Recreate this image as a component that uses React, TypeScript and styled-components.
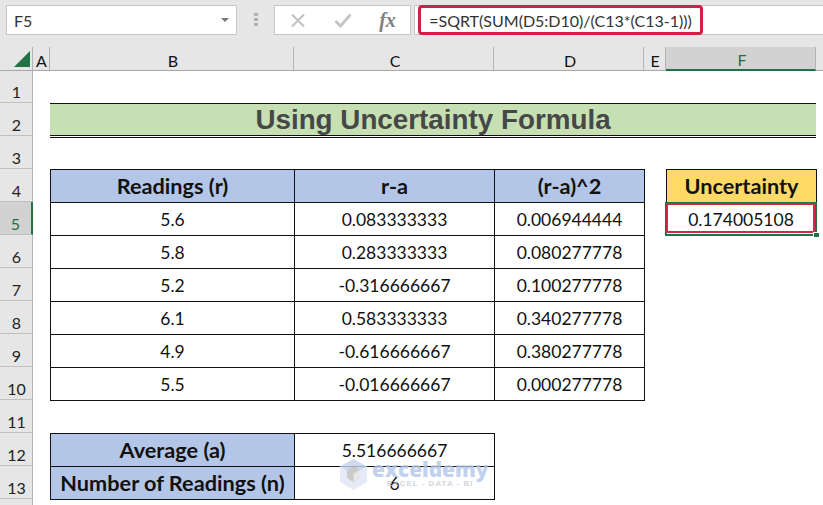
import React from "react";
import styled, { createGlobalStyle } from "styled-components";

const Global = createGlobalStyle`
  html, body { margin: 0; padding: 0; background: #fff; }
  #root { width: 823px; height: 505px; overflow: hidden; }
`;

const CALIBRI = `Lato, "Open Sans", "Liberation Sans", sans-serif`;

const Page = styled.div`
  width: 823px;
  height: 505px;
  overflow: hidden;
  position: relative;
  background: #fff;
  font-family: ${CALIBRI};
  color: #111;
`;

const FormulaBar = styled.div`
  height: 47px;
  box-sizing: border-box;
  padding: 5px 0 0 6px;
  background: #e6e6e6;
  display: flex;
  align-items: flex-start;
`;

const NameBox = styled.div`
  width: 231px;
  height: 30px;
  box-sizing: border-box;
  border: 1px solid #c6c6c6;
  background: #fff;
  display: flex;
  align-items: center;
  justify-content: space-between;
  padding: 0 7px 0 7px;
  font-size: 16px;
  color: #333;
`;

const Caret = styled.span`
  width: 0;
  height: 0;
  border-left: 4px solid transparent;
  border-right: 4px solid transparent;
  border-top: 4px solid #7a7a7a;
`;

const Grip = styled.div`
  width: 4px;
  height: 13px;
  margin: 8px 16px 0 17px;
  background: repeating-linear-gradient(#b1b1b1 0 3px, transparent 3px 5px);
`;

const FxButtons = styled.div`
  width: 137px;
  height: 30px;
  box-sizing: border-box;
  border: 1px solid #c6c6c6;
  background: #fff;
  display: flex;
  align-items: center;
  margin-right: 3px;
`;

const FxSlot = styled.span`
  width: 45px;
  display: flex;
  justify-content: center;
  align-items: center;
  height: 100%;
`;

const FxLabel = styled.span`
  font-family: "Liberation Serif", serif;
  font-style: italic;
  font-weight: 700;
  font-size: 20px;
  color: #808080;
`;

const FormulaInput = styled.div`
  flex: 1;
  height: 30px;
  box-sizing: border-box;
  background: #fff;
  border-top: 1px solid #c6c6c6;
  border-bottom: 1px solid #c6c6c6;
  border-left: 1px solid #c6c6c6;
  padding-left: 3px;
  display: flex;
`;

const FormulaText = styled.div`
  width: 285px;
  height: 30px;
  margin-top: -1px;
  box-sizing: border-box;
  border: 3px solid #cf2146;
  border-radius: 4px;
  font-size: 16px;
  color: #333;
  display: flex;
  align-items: center;
  justify-content: center;
  white-space: nowrap;
`;

const ColumnHeaderRow = styled.div`
  display: flex;
  height: 24px;
  box-sizing: border-box;
  background: #e6e6e6;
  border-bottom: 1px solid #a8a8a8;
`;

const Corner = styled.div`
  width: 33px;
  flex: none;
  position: relative;
  box-sizing: border-box;
  border-right: 1px solid #b4b4b4;
`;

const CornerTriangle = styled.svg`
  position: absolute;
  left: 14px;
  top: 4px;
`;

const ColHead = styled.div<{ $w: number; $active?: boolean }>`
  width: ${(p) => p.$w}px;
  flex: none;
  box-sizing: border-box;
  border-right: 1px solid #b4b4b4;
  display: flex;
  align-items: center;
  justify-content: center;
  font-size: 16px;
  padding: 3px 0 0 ${(p) => (p.$w > 30 ? 3 : 1)}px;
  height: ${(p) => (p.$active ? "24px" : "23px")};
  background: ${(p) => (p.$active ? "#d2d2d2" : "transparent")};
  color: ${(p) => (p.$active ? "#1e6e48" : "#111")};
  border-bottom: ${(p) => (p.$active ? "2px solid #217346" : "none")};
`;

const Body = styled.div`
  display: flex;
  height: 434px;
`;

const RowHeaders = styled.div`
  width: 33px;
  flex: none;
  box-sizing: border-box;
  background: #e6e6e6;
  border-right: 1px solid #b4b4b4;
  display: grid;
  grid-template-rows: 32px repeat(13, 33px);
`;

const RowHead = styled.div<{ $active?: boolean }>`
  box-sizing: border-box;
  border-bottom: 1px solid #c0c0c0;
  display: flex;
  align-items: center;
  justify-content: center;
  padding-top: 10px;
  font-size: 16px;
  margin-right: -1px;
  background: ${(p) => (p.$active ? "#d2d2d2" : "transparent")};
  color: ${(p) => (p.$active ? "#1e6e48" : "#222")};
  border-right: ${(p) => (p.$active ? "2px solid #217346" : "none")};
`;

const Sheet = styled.div`
  flex: 1;
  display: grid;
  position: relative;
  grid-template-columns: 17px 244px 200px 150px 22px 150px 7px;
  grid-template-rows: 32px repeat(13, 33px);
`;

const Cell = styled.div<{ $col: number; $row: number; $bg?: string; $bold?: boolean }>`
  grid-column: ${(p) => p.$col};
  grid-row: ${(p) => p.$row};
  box-sizing: border-box;
  border: 1px solid #111;
  margin: 0 -1px -1px 0;
  display: flex;
  align-items: center;
  justify-content: center;
  white-space: nowrap;
  font-size: ${(p) => (p.$bold ? 21.7 : 17.5)}px;
  font-weight: ${(p) => (p.$bold ? 700 : 400)};
  background: ${(p) => p.$bg ?? "#fff"};
  color: #111;
  padding-top: ${(p) => (p.$bold ? 0 : 1)}px;
  padding-bottom: ${(p) => (p.$bold ? 1 : 0)}px;
`;

const TitleCell = styled.div`
  grid-column: 2 / 7;
  grid-row: 2;
  box-sizing: border-box;
  height: 35px;
  background: #c6e0b4;
  background-clip: padding-box;
  border-top: 1px solid #111;
  border-bottom: 3px double #111;
  display: flex;
  align-items: center;
  justify-content: center;
  font-family: "Liberation Sans", Arial, sans-serif;
  font-weight: 700;
  font-size: 27.8px;
  color: #474747;
`;

const ResultCell = styled(Cell)`
  position: relative;
  border: none;
  margin: 0;
  width: 150px;
  height: 33px;
`;

const SelectionFrame = styled.div`
  position: absolute;
  inset: 0 -1px -1px -1px;
  box-sizing: border-box;
  border: 2px solid #217346;
  pointer-events: none;
`;

const RedFrame = styled.div`
  position: absolute;
  inset: 1px 1px 2px 0;
  box-sizing: border-box;
  border: 2px solid #d8234a;
  border-radius: 2px;
  pointer-events: none;
`;

const Handle = styled.div`
  position: absolute;
  right: -3px;
  bottom: -2px;
  width: 5px;
  height: 4px;
  background: #217346;
  border-left: 1px solid #fff;
  border-top: 1px solid #fff;
`;

const Watermark = styled.div`
  position: absolute;
  left: 340px;
  top: 459px;
  display: flex;
  gap: 5px;
  opacity: 0.8;
  pointer-events: none;
`;

const WmText = styled.div`
  display: flex;
  flex-direction: column;
  align-items: center;
`;

const WmName = styled.div`
  font-family: "Open Sans", sans-serif;
  font-weight: 800;
  font-size: 20.8px;
  line-height: 20px;
  color: #b4c6e9;
`;

const WmTag = styled.div`
  font-family: "Liberation Sans", sans-serif;
  font-weight: 700;
  font-size: 8px;
  line-height: 10px;
  letter-spacing: 1px;
  color: #c8ccd3;
`;

const colHeads: Array<[string, number, boolean?]> = [
  ["A", 17],
  ["B", 244],
  ["C", 200],
  ["D", 150],
  ["E", 22],
  ["F", 150, true],
];

const readings = [
  ["5.6", "0.083333333", "0.006944444"],
  ["5.8", "0.283333333", "0.080277778"],
  ["5.2", "-0.316666667", "0.100277778"],
  ["6.1", "0.583333333", "0.340277778"],
  ["4.9", "-0.616666667", "0.380277778"],
  ["5.5", "-0.016666667", "0.000277778"],
];

const BLUE = "#b4c6e7";
const GOLD = "#ffd966";

export default function App() {
  return (
    <Page>
      <Global />
      <FormulaBar>
        <NameBox>
          F5
          <Caret />
        </NameBox>
        <Grip />
        <FxButtons>
          <FxSlot>
            <svg width="16" height="15" viewBox="0 0 16 15">
              <path d="M2 1.5 14 13.5M14 1.5 2 13.5" stroke="#c4c4c4" strokeWidth="2.2" fill="none" />
            </svg>
          </FxSlot>
          <FxSlot>
            <svg width="18" height="15" viewBox="0 0 18 15">
              <path d="M1.5 8 6.5 13 16.5 1.5" stroke="#c4c4c4" strokeWidth="2.8" fill="none" />
            </svg>
          </FxSlot>
          <FxSlot>
            <FxLabel>fx</FxLabel>
          </FxSlot>
        </FxButtons>
        <FormulaInput>
          <FormulaText>=SQRT(SUM(D5:D10)/(C13*(C13-1)))</FormulaText>
        </FormulaInput>
      </FormulaBar>
      <ColumnHeaderRow>
        <Corner>
          <CornerTriangle width="16" height="16" viewBox="0 0 16 16">
            <path d="M0 16 16 0V16Z" fill="#217346" />
          </CornerTriangle>
        </Corner>
        {colHeads.map(([label, w, active]) => (
          <ColHead key={label} $w={w} $active={active}>
            {label}
          </ColHead>
        ))}
      </ColumnHeaderRow>
      <Body>
        <RowHeaders>
          {Array.from({ length: 14 }, (_, i) => (
            <RowHead key={i} $active={i === 4}>
              {i < 13 ? i + 1 : ""}
            </RowHead>
          ))}
        </RowHeaders>
        <Sheet>
          <TitleCell>Using Uncertainty Formula</TitleCell>
          <Cell $col={2} $row={4} $bg={BLUE} $bold>Readings (r)</Cell>
          <Cell $col={3} $row={4} $bg={BLUE} $bold>r-a</Cell>
          <Cell $col={4} $row={4} $bg={BLUE} $bold>(r-a)^2</Cell>
          {readings.map((r, i) =>
            r.map((v, j) => (
              <Cell key={`${i}-${j}`} $col={j + 2} $row={i + 5}>
                {v}
              </Cell>
            ))
          )}
          <Cell $col={6} $row={4} $bg={GOLD} $bold>Uncertainty</Cell>
          <ResultCell $col={6} $row={5}>
            0.174005108
            <SelectionFrame />
            <RedFrame />
            <Handle />
          </ResultCell>
          <Cell $col={2} $row={12} $bg={BLUE} $bold>Average (a)</Cell>
          <Cell $col={3} $row={12}>5.516666667</Cell>
          <Cell $col={2} $row={13} $bg={BLUE} $bold>Number of Readings (n)</Cell>
          <Cell $col={3} $row={13}>6</Cell>
        </Sheet>
      </Body>
      <Watermark>
        <svg width="27" height="31" viewBox="0 0 27 31">
          <path d="M13.5 0 27 7.5V23L13.5 31 0 23V7.5Z" fill="#dfe7f5" />
          <path d="M13.5 0 27 7.5 13.5 15 0 7.5Z" fill="#c4d2ec" />
          <path d="M7 11 13.5 7 20 11V19L13.5 23 7 19Z" fill="#bdbdbd" />
          <path d="M13.5 15 20 11V19L13.5 23Z" fill="#e3e3e3" />
        </svg>
        <WmText>
          <WmName>exceldemy</WmName>
          <WmTag>EXCEL - DATA - BI</WmTag>
        </WmText>
      </Watermark>
    </Page>
  );
}
